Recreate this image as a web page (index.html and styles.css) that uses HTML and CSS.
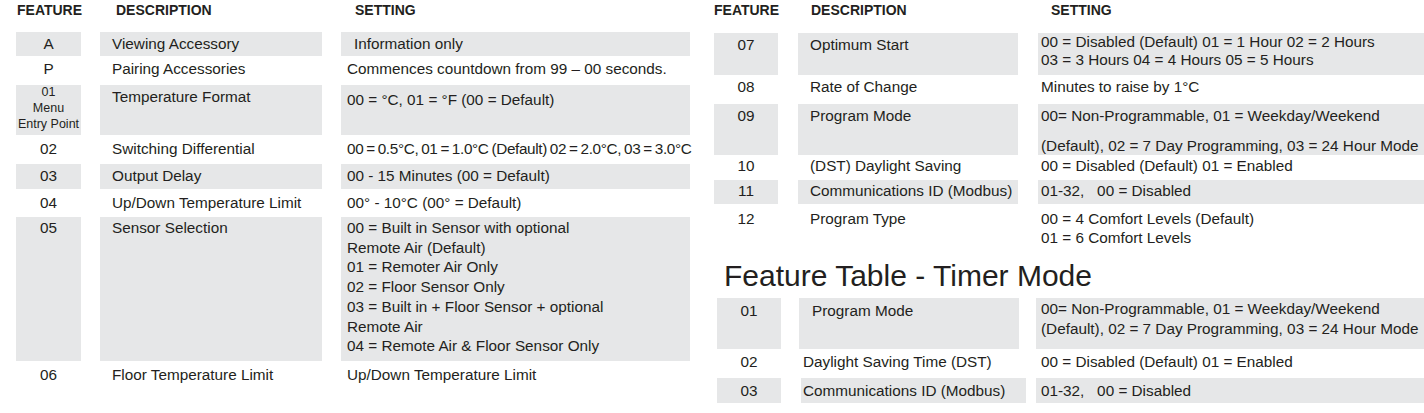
FILE: index.html
```html
<!DOCTYPE html>
<html lang="en">
<head>
<meta charset="utf-8">
<title>Feature Table</title>
<link rel="stylesheet" href="styles.css">
</head>
<body>
<div class="page">
  <section class="tbl left">
    <div class="hdr"><span class="h1">FEATURE</span><span class="h2">DESCRIPTION</span><span>SETTING</span></div>
    <div class="row ra">
      <div class="f g">A</div><div class="d g">Viewing Accessory</div><div class="s g sa">Information only</div>
    </div>
    <div class="row rp">
      <div class="f">P</div><div class="d">Pairing Accessories</div><div class="s">Commences countdown from 99 – 00 seconds.</div>
    </div>
    <div class="row r01">
      <div class="f g"><div class="menu">01<br>Menu<br>Entry Point</div></div><div class="d g">Temperature Format</div><div class="s g">00 = °C, 01 = °F (00 = Default)</div>
    </div>
    <div class="row r02">
      <div class="f">02</div><div class="d">Switching Differential</div><div class="s tight">00 = 0.5°C, 01 = 1.0°C (Default) 02 = 2.0°C, 03 = 3.0°C</div>
    </div>
    <div class="row r03">
      <div class="f g">03</div><div class="d g">Output Delay</div><div class="s g">00 - 15 Minutes (00 = Default)</div>
    </div>
    <div class="row r04">
      <div class="f">04</div><div class="d">Up/Down Temperature Limit</div><div class="s">00° - 10°C (00° = Default)</div>
    </div>
    <div class="row r05">
      <div class="f g">05</div><div class="d g">Sensor Selection</div><div class="s g">00 = Built in Sensor with optional<br>Remote Air (Default)<br>01 = Remoter Air Only<br>02 = Floor Sensor Only<br>03 = Built in + Floor Sensor + optional<br>Remote Air<br>04 = Remote Air &amp; Floor Sensor Only</div>
    </div>
    <div class="row r06">
      <div class="f">06</div><div class="d">Floor Temperature Limit</div><div class="s">Up/Down Temperature Limit</div>
    </div>
  </section>

  <section class="tbl right">
    <div class="hdr"><span class="h1">FEATURE</span><span class="h2">DESCRIPTION</span><span>SETTING</span></div>
    <div class="row r07">
      <div class="f g">07</div><div class="d g">Optimum Start</div><div class="s g">00 = Disabled (Default) 01 = 1 Hour 02 = 2 Hours<br>03 = 3 Hours 04 = 4 Hours 05 = 5 Hours</div>
    </div>
    <div class="row r08">
      <div class="f">08</div><div class="d">Rate of Change</div><div class="s">Minutes to raise by 1°C</div>
    </div>
    <div class="row r09">
      <div class="f g">09</div><div class="d g">Program Mode</div><div class="s g"><div class="l1">00= Non-Programmable, 01 = Weekday/Weekend</div><div class="l2">(Default), 02 = 7 Day Programming, 03 = 24 Hour Mode</div></div>
    </div>
    <div class="row r10">
      <div class="f">10</div><div class="d">(DST) Daylight Saving</div><div class="s">00 = Disabled (Default) 01 = Enabled</div>
    </div>
    <div class="row r11">
      <div class="f g">11</div><div class="d g">Communications ID (Modbus)</div><div class="s g">01-32, &nbsp;&nbsp;00 = Disabled</div>
    </div>
    <div class="row r12">
      <div class="f">12</div><div class="d">Program Type</div><div class="s">00 = 4 Comfort Levels (Default)<br>01 = 6 Comfort Levels</div>
    </div>

    <h2 class="title">Feature Table - Timer Mode</h2>

    <div class="timer">
      <div class="row t01">
        <div class="f g">01</div><div class="d g">Program Mode</div><div class="s g">00= Non-Programmable, 01 = Weekday/Weekend<br>(Default), 02 = 7 Day Programming, 03 = 24 Hour Mode</div>
      </div>
      <div class="row t02">
        <div class="f">02</div><div class="d dn">Daylight Saving Time (DST)</div><div class="s">00 = Disabled (Default) 01 = Enabled</div>
      </div>
      <div class="row t03">
        <div class="f g">03</div><div class="d g dn dw">Communications ID (Modbus)</div><div class="s g">01-32, &nbsp;&nbsp;00 = Disabled</div>
      </div>
    </div>
  </section>
</div>
</body>
</html>
```

FILE: styles.css
```css
* { box-sizing: border-box; }

body {
  margin: 0;
  background: #ffffff;
  color: #231f20;
  font-family: "Liberation Sans", Arial, sans-serif;
  font-size: 15.3px;
}

.page {
  display: flex;
  width: 1424px;
  height: 413px;
  overflow: hidden;
}

.tbl { display: flex; flex-direction: column; }
.left { width: 714px; padding-left: 16px; }
.right { width: 710px; }

/* headers */
.hdr {
  display: flex;
  font-weight: bold;
  font-size: 14px;
  line-height: 20px;
  white-space: nowrap;
}
.left .hdr { height: 32px; padding-left: 1px; }
.left .hdr .h1 { width: 99px; }
.left .hdr .h2 { width: 239px; }
.right .hdr { height: 33px; }
.right .hdr .h1 { width: 97px; }
.right .hdr .h2 { width: 240px; }

/* rows */
.row { display: flex; flex-shrink: 0; }
.row > div { line-height: 20px; white-space: nowrap; }
.g { background: #e6e7e8; }

.f { text-align: center; }

.left .f { width: 65px; }
.left .d { width: 222px; margin-left: 19px; padding-left: 12px; }
.left .s { width: 349px; margin-left: 19px; padding-left: 6px; }
.left .s.sa { padding-left: 13px; }
.tight { word-spacing: -1px; letter-spacing: -0.35px; }

.right .f { width: 64px; }
.right .d { width: 220px; margin-left: 20px; padding-left: 12px; }
.right .s { flex: 1; margin-left: 20px; padding-left: 3px; }

/* left table row geometry */
.ra { height: 24px; }
.ra > div { padding-top: 2px; }
.rp { height: 26px; margin-bottom: 3px; }
.rp > div { padding-top: 3px; }
.r01 { height: 50px; }
.r01 .f { font-size: 12.5px; line-height: 16px; }
.r01 .menu { margin-top: -1px; }
.r01 .d { padding-top: 2px; }
.r01 .s { padding-top: 5px; }
.r02 { height: 29px; }
.r02 > div { padding-top: 4px; }
.r03 { height: 25px; }
.r03 > div { padding-top: 2px; }
.r04 { height: 28px; }
.r04 > div { padding-top: 4px; }
.r05 { height: 144px; }
.r05 > div { padding-top: 1px; line-height: 19.7px; }
.r06 { height: 28px; }
.r06 > div { padding-top: 4px; }

/* right table row geometry */
.r07 { height: 42px; }
.r07 .f, .r07 .d { padding-top: 2px; }
.r07 .s { line-height: 18px; }
.r08 { height: 29px; }
.r08 > div { padding-top: 2px; }
.r09 { height: 51px; }
.r09 > div { padding-top: 2px; }
.r09 .l2 { margin-top: 10px; }
.r10 { height: 25px; }
.r10 > div { padding-top: 1px; }
.r11 { height: 24px; }
.r11 > div { padding-top: 1px; }
.r12 { height: 44px; }
.r12 > div { line-height: 19px; padding-top: 5px; }

.title {
  margin: 0;
  height: 50px;
  padding: 10px 0 0 10px;
  font-size: 30px;
  font-weight: normal;
  line-height: 36px;
  white-space: nowrap;
  flex-shrink: 0;
}

/* timer table */
.timer { display: flex; flex-direction: column; }
.timer .f { margin-left: 3px; width: 64px; }
.timer .d { margin-left: 18px; width: 220px; padding-left: 13px; }
.timer .d.dn { padding-left: 4px; }
.timer .d.dw { width: 225px; margin-left: 20px; padding-left: 2px; }
.timer .s { margin-left: 17px; padding-left: 5px; }
.timer .t03 .s { margin-left: 10px; }

.t01 { height: 51px; }
.t01 .f, .t01 .d { padding-top: 3px; }
.t01 .s { padding-top: 1px; }
.t02 { height: 29px; }
.t02 > div { padding-top: 3px; }
.t03 { height: 25px; }
.t03 > div { padding-top: 3px; }
```
